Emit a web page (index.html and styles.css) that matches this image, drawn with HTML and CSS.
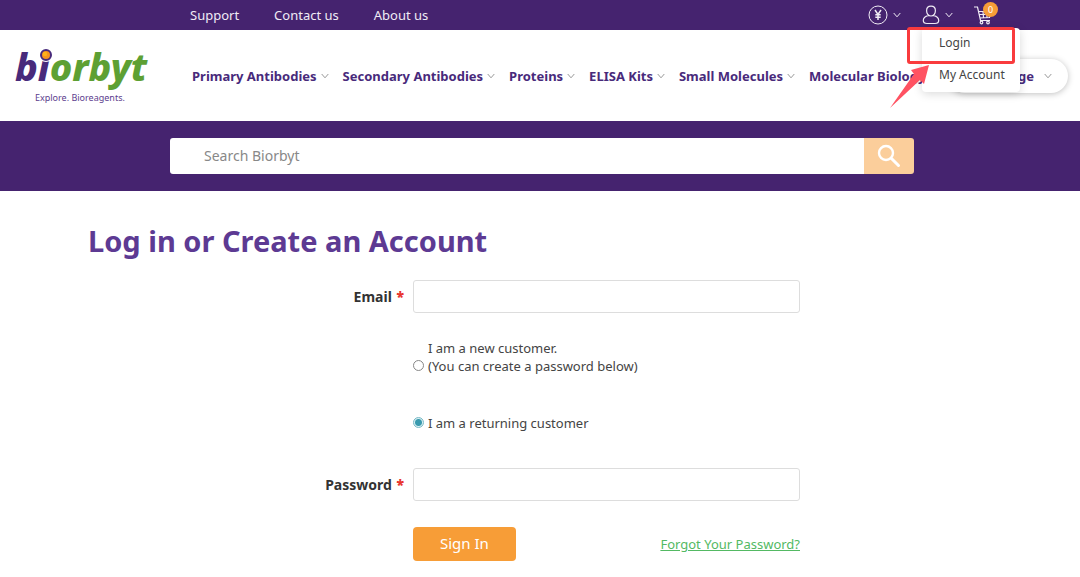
FILE: index.html
```html
<!DOCTYPE html>
<html lang="en">
<head>
<meta charset="utf-8">
<title>Biorbyt - Log in or Create an Account</title>
<link rel="stylesheet" href="styles.css">
</head>
<body>
<svg class="defs" aria-hidden="true"><symbol id="chev" viewBox="0 0 8 6"><path d="M.7 1l3.3 3.8L7.300 1" fill="none" stroke="currentColor" stroke-width="1"/></symbol></svg>
<header>
  <div class="topbar">
    <nav class="toplinks"><a href="#">Support</a><a href="#">Contact us</a><a href="#">About us</a></nav>
    <div class="tools">
      <button class="tool" aria-label="Currency">
        <svg width="20" height="20" viewBox="0 0 20 20" fill="none" stroke="currentColor"><circle cx="10" cy="10" r="9"/><path d="M7 5l3 4.500L13 5M10 9.500V15M7.300 9.800h5.400M7.300 12.200h5.400" stroke-width="1.500"/></svg>
        <svg class="chev" aria-hidden="true"><use href="#chev"/></svg>
      </button>
      <div class="account">
        <button class="tool" aria-label="Account">
          <svg width="18" height="20" viewBox="0 0 18 20" fill="none" stroke="currentColor" stroke-width="1.200"><path d="M9 1.200c-2.800 0-4.400 2-4.400 4.500S6.200 11 9 11s4.400-2.800 4.400-5.300S11.800 1.200 9 1.200zM6.500 10.400C3.500 11.300 1.300 13 1.300 15.500c0 2 1.500 3 3.700 3h8c2.200 0 3.700-1 3.700-3 0-2.500-2.200-4.200-5.200-5.100"/></svg>
          <svg class="chev" aria-hidden="true"><use href="#chev"/></svg>
        </button>
        <div class="menu"><a href="#">Login</a><a href="#">My Account</a></div>
        <div class="highlight"></div>
        <svg class="arrow" viewBox="0 0 40 44" aria-hidden="true"><path d="M0 43L24 9 21 5 39 0 34 19 30 15z" fill="#ff5262"/></svg>
      </div>
      <a class="cart" href="#" aria-label="Cart">
        <svg width="18" height="19" viewBox="0 0 18 19" fill="none" stroke="currentColor" stroke-width="1.200"><path d="M0 1h3.500l3 13.500H16M5 5.500h12l-1.500 6L6 12M5.500 8.500h10M9 5.500l.5 6M13 5.500v6"/><circle cx="7.500" cy="16.500" r="1.300"/><circle cx="14" cy="16.500" r="1.300"/></svg>
        <span class="badge">0</span>
      </a>
    </div>
  </div>
  <div class="mainbar">
    <a class="logo" href="#" aria-label="Biorbyt">
      <svg width="140" height="64" viewBox="0 0 140 64">
        <text x="0" y="37" class="word"><tspan fill="#482a7b">bı</tspan><tspan fill="#5da033">orbyt</tspan></text>
        <circle cx="31" cy="11" r="7" fill="#fff"/><circle cx="31" cy="11" r="5" fill="#f7941e" stroke="#482a7b" stroke-width="2"/><circle cx="30" cy="10" r="2.200" fill="#ffb31a"/>
        <text x="20" y="57" class="tag">Explore. Bioreagents.</text>
      </svg>
    </a>
    <nav class="mainnav">
      <a href="#">Primary Antibodies<svg class="chev"><use href="#chev"/></svg></a>
      <a href="#">Secondary Antibodies<svg class="chev"><use href="#chev"/></svg></a>
      <a href="#">Proteins<svg class="chev"><use href="#chev"/></svg></a>
      <a href="#">ELISA Kits<svg class="chev"><use href="#chev"/></svg></a>
      <a href="#">Small Molecules<svg class="chev"><use href="#chev"/></svg></a>
      <a href="#">Molecular Biology</a>
    </nav>
    <button class="language">Language<svg class="chev"><use href="#chev"/></svg></button>
  </div>
  <form class="search">
    <input type="search" placeholder="Search Biorbyt" aria-label="Search Biorbyt">
    <button type="button" aria-label="Search"><svg width="24" height="24" viewBox="0 0 24 24" fill="none" stroke="#fff"><circle cx="9" cy="9" r="7" stroke-width="2.400"/><path d="M14.500 14.500l7 7" stroke-width="3" stroke-linecap="round"/></svg></button>
  </form>
</header>
<main>
  <h1>Log in or Create an Account</h1>
  <form class="login">
    <label class="name" for="email">Email <b>*</b></label>
    <input class="field" id="email" type="email">
    <div class="choices">
      <div class="choice"><input type="radio" name="customer" id="new"><label for="new">I am a new customer.<br>(You can create a password below)</label></div>
      <div class="choice"><input type="radio" name="customer" id="returning" checked><label for="returning">I am a returning customer</label></div>
    </div>
    <label class="name" for="password">Password <b>*</b></label>
    <input class="field" id="password" type="password">
    <div class="actions"><button type="button">Sign In</button><a href="#">Forgot Your Password?</a></div>
  </form>
</main>
</body>
</html>
```
FILE: styles.css
```css
* { box-sizing: border-box; }
body { margin: 0; background: #fff; color: #444; font: 14px/18px "Noto Sans", sans-serif; overflow-x: hidden; }
a { color: inherit; text-decoration: none; }
button { font: inherit; color: inherit; border: 0; background: none; padding: 0; cursor: pointer; }
.defs { position: absolute; width: 0; height: 0; }
.chev { width: 8px; height: 6px; flex: none; }

.topbar { display: flex; justify-content: space-between; align-items: center; height: 30px; padding: 0 88px 0 190px; background: #45236f; color: #f0ebf5; }
.toplinks { display: flex; gap: 35px; font-size: 13px; }
.tools { display: flex; align-items: center; gap: 21px; }
.tool { display: flex; align-items: center; gap: 5px; }
.tool svg { display: block; }
.account { position: relative; }
.menu { position: absolute; z-index: 2; top: 23px; left: 0; width: 98px; background: #fff; border-radius: 4px; box-shadow: 0 2px 10px rgba(0, 0, 0, .15); color: #444; font-size: 12px; }
.menu a { display: block; padding: 6px 0 8px 17px; }
.highlight { position: absolute; z-index: 3; top: 22px; left: -15px; width: 108px; height: 37px; border: 3px solid #f93b3d; border-radius: 3px; }
.arrow { position: absolute; z-index: 4; top: 60px; left: -32px; width: 40px; height: 44px; }
.cart { position: relative; display: flex; }
.badge { position: absolute; top: -4px; left: 9px; width: 15px; height: 15px; border-radius: 50%; background: #f79d37; color: #fff; font-size: 9px; line-height: 15px; text-align: center; }

.mainbar { display: flex; align-items: center; height: 91px; padding: 0 12px 0 15px; color: #482a7b; font-weight: 700; white-space: nowrap; }
.logo { flex: none; width: 177px; }
.logo svg { display: block; overflow: visible; }
.word { font: italic 800 38px "Noto Sans", sans-serif; }
.tag { font: 9px "Noto Sans", sans-serif; fill: #5c3d8e; }
.mainnav { display: flex; flex: 1; gap: 14px; min-width: 0; font-size: 13px; }
.mainnav a { display: flex; align-items: center; gap: 4px; }
.mainnav .chev, .language .chev { color: #999; }
.language { display: flex; flex: none; align-items: center; justify-content: flex-end; gap: 10px; width: 120px; height: 34px; padding-right: 16px; border-radius: 17px; box-shadow: 0 1px 6px rgba(0, 0, 0, .25); font-size: 13px; font-weight: 700; }

.search { display: flex; padding: 17px 166px 17px 170px; background: #45236f; }
.search input { flex: 1; min-width: 0; height: 36px; padding: 0 34px 2px; border: 0; border-radius: 3px 0 0 3px; background: #fff; color: #444; font: inherit; outline: 0; }
.search input::placeholder { color: #888; }
.search button { display: grid; place-items: center; width: 50px; background: #fbce9b; border-radius: 0 3px 3px 0; }

main { padding: 32px 88px 16px; }
h1 { margin: 0; color: #5d3a93; font-size: 29px; line-height: 36px; }
.login { display: grid; grid-template-columns: 316px minmax(0, 387px); column-gap: 9px; align-items: center; margin-top: 21px; }
.name { text-align: right; font-weight: 700; color: #333; }
.name b { color: #e8352e; margin-left: 1px; }
.field { width: 100%; height: 33px; padding: 0 10px; border: 1px solid #ddd; border-radius: 3px; background: #fff; font: inherit; }
.choices, .actions { grid-column: 2; }
.choices { display: grid; gap: 39px; padding: 26px 0 36px; font-size: 13px; }
.choice { display: flex; align-items: flex-end; gap: 4px; }
.choice input { appearance: none; flex: none; width: 11px; height: 11px; margin: 0 0 4px; border: 1px solid #888; border-radius: 50%; background: #fff; }
.choice input:checked { border-color: #77b9c5; background: radial-gradient(circle, #399aae 0 3px, #d9eff3 4px); }
.actions { display: flex; justify-content: space-between; align-items: center; margin-top: 26px; }
.actions button { height: 34px; padding: 0 27px 2px; border-radius: 4px; background: #f79d37; color: #fff; font-size: 15px; }
.actions a { color: #53b963; text-decoration: underline; font-size: 13px; }
```
